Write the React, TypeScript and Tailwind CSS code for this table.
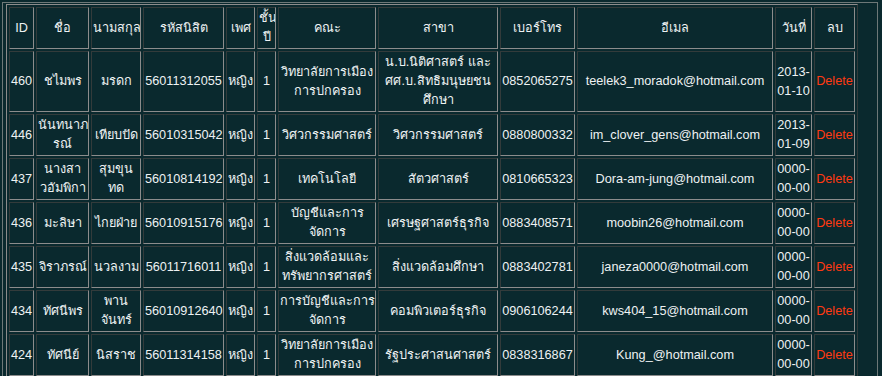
import React from "react";

type Row = {
  id: string;
  first: React.ReactNode;
  last: React.ReactNode;
  code: string;
  sex: string;
  year: string;
  faculty: React.ReactNode;
  major: React.ReactNode;
  phone: string;
  email: string;
  date: React.ReactNode;
};

const rows: Row[] = [
  {
    id: "460",
    first: "ชไมพร",
    last: "มรดก",
    code: "56011312055",
    sex: "หญิง",
    year: "1",
    faculty: <>วิทยาลัยการเมือง<br />การปกครอง</>,
    major: <>น.บ.นิติศาสตร์ และ<br />ศศ.บ.สิทธิมนุษยชน<br />ศึกษา</>,
    phone: "0852065275",
    email: "teelek3_moradok@hotmail.com",
    date: <>2013-<br />01-10</>,
  },
  {
    id: "446",
    first: <>นันทนาภ<br />รณ์</>,
    last: "เทียบปัด",
    code: "56010315042",
    sex: "หญิง",
    year: "1",
    faculty: "วิศวกรรมศาสตร์",
    major: "วิศวกรรมศาสตร์",
    phone: "0880800332",
    email: "im_clover_gens@hotmail.com",
    date: <>2013-<br />01-09</>,
  },
  {
    id: "437",
    first: <>นางสา<br />วอัมพิกา</>,
    last: <>สุมขุน<br />ทด</>,
    code: "56010814192",
    sex: "หญิง",
    year: "1",
    faculty: "เทคโนโลยี",
    major: "สัตวศาสตร์",
    phone: "0810665323",
    email: "Dora-am-jung@hotmail.com",
    date: <>0000-<br />00-00</>,
  },
  {
    id: "436",
    first: "มะลิษา",
    last: "ไกยฝ่าย",
    code: "56010915176",
    sex: "หญิง",
    year: "1",
    faculty: <>บัญชีและการ<br />จัดการ</>,
    major: "เศรษฐศาสตร์ธุรกิจ",
    phone: "0883408571",
    email: "moobin26@hotmail.com",
    date: <>0000-<br />00-00</>,
  },
  {
    id: "435",
    first: "จิราภรณ์",
    last: "นวลงาม",
    code: "56011716011",
    sex: "หญิง",
    year: "1",
    faculty: <>สิ่งแวดล้อมและ<br />ทรัพยากรศาสตร์</>,
    major: "สิ่งแวดล้อมศึกษา",
    phone: "0883402781",
    email: "janeza0000@hotmail.com",
    date: <>0000-<br />00-00</>,
  },
  {
    id: "434",
    first: "ทัศนีพร",
    last: <>พาน<br />จันทร์</>,
    code: "56010912640",
    sex: "หญิง",
    year: "1",
    faculty: <>การบัญชีและการ<br />จัดการ</>,
    major: "คอมพิวเตอร์ธุรกิจ",
    phone: "0906106244",
    email: "kws404_15@hotmail.com",
    date: <>0000-<br />00-00</>,
  },
  {
    id: "424",
    first: "ทัศนีย์",
    last: "นิสราช",
    code: "56011314158",
    sex: "หญิง",
    year: "1",
    faculty: <>วิทยาลัยการเมือง<br />การปกครอง</>,
    major: "รัฐประศาสนศาสตร์",
    phone: "0838316867",
    email: "Kung_@hotmail.com",
    date: <>0000-<br />00-00</>,
  },
];

const cell =
  "border border-t-[#333b3b] border-l-[#333b3b] border-r-[#8c8c8c] border-b-[#8c8c8c] p-px text-center align-middle font-normal whitespace-nowrap overflow-hidden";

export default function App() {
  return (
    <div className="w-[882px] h-[376px] overflow-hidden bg-[#0a292e] pt-[2px] pl-[2px] font-['Tahoma','Liberation_Sans',sans-serif] text-[12.7px] leading-[19px] text-[#eef2f3]">
      <div className="w-[876px] h-[400px] border-l border-t border-r border-[#6d7878] pt-[1px] pl-[3px]">
        <table className="table-fixed border-separate border-spacing-[2px] border border-t-[#8c8c8c] border-l-[#8c8c8c] border-r-[#333b3b] border-b-[#333b3b] w-[852px]">
          <colgroup>
            <col className="w-[25px]" />
            <col className="w-[53px]" />
            <col className="w-[50px]" />
            <col className="w-[81px]" />
            <col className="w-[29px]" />
            <col className="w-[19px]" />
            <col className="w-[98px]" />
            <col className="w-[120px]" />
            <col className="w-[75px]" />
            <col className="w-[196px]" />
            <col className="w-[37px]" />
            <col className="w-[41px]" />
          </colgroup>
          <thead>
            <tr>
              <th className={cell}>ID</th>
              <th className={cell}>ชื่อ</th>
              <th className={cell}>นามสกุล</th>
              <th className={cell}>รหัสนิสิต</th>
              <th className={cell}>เพศ</th>
              <th className={cell}>ชั้น<br />ปี</th>
              <th className={cell}>คณะ</th>
              <th className={cell}>สาขา</th>
              <th className={cell}>เบอร์โทร</th>
              <th className={cell}>อีเมล</th>
              <th className={cell}>วันที่</th>
              <th className={cell}>ลบ</th>
            </tr>
          </thead>
          <tbody>
            {rows.map((r) => (
              <tr key={r.id}>
                <td className={cell}>{r.id}</td>
                <td className={cell}>{r.first}</td>
                <td className={cell}>{r.last}</td>
                <td className={cell}>{r.code}</td>
                <td className={cell}>{r.sex}</td>
                <td className={cell}>{r.year}</td>
                <td className={cell}>{r.faculty}</td>
                <td className={cell}>{r.major}</td>
                <td className={cell}>{r.phone}</td>
                <td className={cell}>{r.email}</td>
                <td className={cell}>{r.date}</td>
                <td className={cell}>
                  <a href="#" className="text-[#ff3a12]">Delete</a>
                </td>
              </tr>
            ))}
          </tbody>
        </table>
      </div>
    </div>
  );
}
